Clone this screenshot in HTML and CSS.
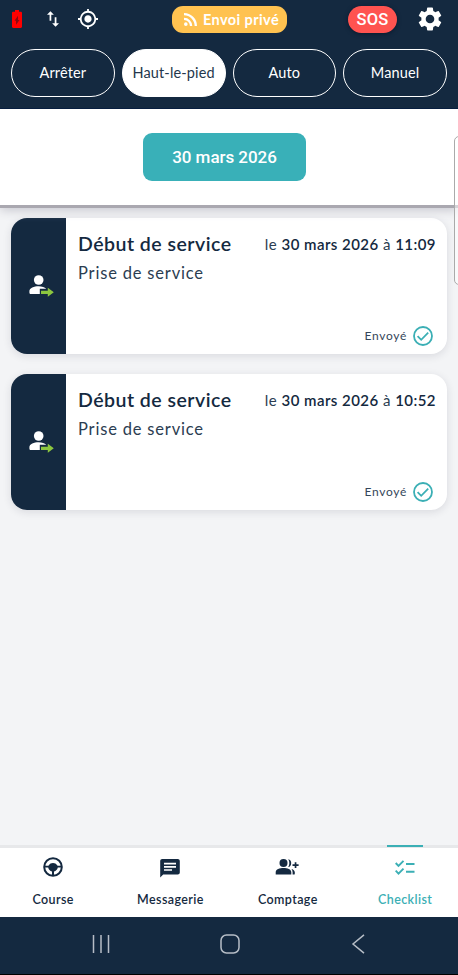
FILE: index.html
```html
<!DOCTYPE html>
<html lang="fr">
<head>
<meta charset="utf-8">
<meta name="viewport" content="width=device-width, initial-scale=1">
<title>Checklist</title>
<link rel="stylesheet" href="styles.css">
</head>
<body>
<div class="app">
  <header class="header">
    <div class="status">
      <svg class="battery" viewBox="7 2 10 20" preserveAspectRatio="none"><path fill="#8d0710" d="M8.500 7h7v13h-7z"/><path d="M15.67 4H14V2h-4v2H8.33C7.6 4 7 4.6 7 5.33v15.33C7 21.4 7.6 22 8.33 22h7.33c.74 0 1.34-.6 1.34-1.33V5.33C17 4.6 16.4 4 15.67 4zM11 18.500v-4.500H9.500L13 8.500v4.500h1.500L11 18.500z"/></svg>
      <svg class="sync" viewBox="5 3 14 18"><path d="M9 3L5 6.99h3V14h2V6.99h3L9 3zm7 14.01V10h-2v7.01h-3L15 21l4-3.99h-3z"/></svg>
      <svg class="gps" viewBox="1 1 22 22"><path d="M12 8c-2.21 0-4 1.79-4 4s1.79 4 4 4 4-1.79 4-4-1.79-4-4-4zm8.94 3A8.994 8.994 0 0 0 13 3.06V1h-2v2.06A8.994 8.994 0 0 0 3.06 11H1v2h2.06A8.994 8.994 0 0 0 11 20.94V23h2v-2.06A8.994 8.994 0 0 0 20.94 13H23v-2h-2.06zM12 19c-3.87 0-7-3.13-7-7s3.13-7 7-7 7 3.13 7 7-3.13 7-7 7z"/></svg>
      <div class="private">
        <svg class="rss" viewBox="4 4.44 15.56 15.56"><path d="M6.18 15.64a2.18 2.18 0 1 1 0 4.36 2.18 2.18 0 0 1 0-4.36M4 4.44A15.56 15.56 0 0 1 19.56 20h-2.83A12.73 12.73 0 0 0 4 7.27zm0 5.66a9.9 9.9 0 0 1 9.9 9.9h-2.83A7.07 7.07 0 0 0 4 12.93z"/></svg>
        <span>Envoi privé</span>
      </div>
      <div class="sos">SOS</div>
      <svg class="gear" viewBox="2 2 20 20"><path d="M19.14 12.94c.04-.3.06-.61.06-.94 0-.32-.02-.64-.07-.94l2.03-1.58a.49.49 0 0 0 .12-.61l-1.92-3.32a.488.488 0 0 0-.59-.22l-2.39.96c-.5-.38-1.03-.7-1.62-.94l-.36-2.54a.484.484 0 0 0-.48-.41h-3.84c-.24 0-.43.17-.47.41l-.36 2.54c-.59.24-1.13.57-1.62.94l-2.39-.96c-.22-.08-.47 0-.59.22L2.74 8.87c-.12.21-.08.47.12.61l2.03 1.58c-.05.3-.09.63-.09.94s.02.64.07.94l-2.03 1.58a.49.49 0 0 0-.12.61l1.92 3.32c.12.22.37.29.59.22l2.39-.96c.5.38 1.03.7 1.62.94l.36 2.54c.05.24.24.41.48.41h3.84c.24 0 .44-.17.47-.41l.36-2.54c.59-.24 1.13-.56 1.62-.94l2.39.96c.22.08.47 0 .59-.22l1.92-3.32c.12-.22.07-.47-.12-.61l-2.01-1.58zM12 15.6A3.6 3.6 0 1 1 12 8.4a3.6 3.6 0 0 1 0 7.2z"/></svg>
    </div>
    <div class="modes">
      <button class="mode">Arrêter</button>
      <button class="mode selected">Haut-le-pied</button>
      <button class="mode">Auto</button>
      <button class="mode">Manuel</button>
    </div>
  </header>
  <section class="datebar"><button class="date">30 mars 2026</button></section>
  <main class="list">
    <article class="card">
      <div class="stripe"><svg class="person" viewBox="0 0 25 22"><circle cx="9.700" cy="5" r="4.800" fill="#fff"/><path fill="#fff" d="M2 19C1 19 .4 18.400.4 17.400V16c0-3 4.600-4.800 9.300-4.800 3.200 0 6 .9 7.600 2.600h-6.500V19z"/><path fill="#8cc63f" d="M12 15.700h6.800v-2.900l6 4.500-6 4.500v-2.900H12z"/></svg></div>
      <div class="content">
        <div class="row"><h2>Début de service</h2><p class="when">le <b>30 mars 2026</b> à <b>11:09</b></p></div>
        <p class="detail">Prise de service</p>
        <div class="sent"><span>Envoyé</span><svg class="check" viewBox="0 0 20 20"><circle cx="10" cy="10" r="9"/><path d="M4.600 10.100l3.600 3.700 7-7.100"/></svg></div>
      </div>
    </article>
    <article class="card">
      <div class="stripe"><svg class="person" viewBox="0 0 25 22"><circle cx="9.700" cy="5" r="4.800" fill="#fff"/><path fill="#fff" d="M2 19C1 19 .4 18.400.4 17.400V16c0-3 4.600-4.800 9.300-4.800 3.200 0 6 .9 7.600 2.600h-6.500V19z"/><path fill="#8cc63f" d="M12 15.700h6.800v-2.900l6 4.500-6 4.500v-2.900H12z"/></svg></div>
      <div class="content">
        <div class="row"><h2>Début de service</h2><p class="when">le <b>30 mars 2026</b> à <b>10:52</b></p></div>
        <p class="detail">Prise de service</p>
        <div class="sent"><span>Envoyé</span><svg class="check" viewBox="0 0 20 20"><circle cx="10" cy="10" r="9"/><path d="M4.600 10.100l3.600 3.700 7-7.100"/></svg></div>
      </div>
    </article>
  </main>
  <nav class="tabs">
    <div class="tab">
      <svg viewBox="0 0 24 24"><circle cx="12" cy="12" r="8.800" fill="none" stroke="currentColor" stroke-width="2"/><path d="M3 10.800h4.400C8.800 8.700 10.200 8 12 8s3.200.7 4.600 2.800H21v1.700h-4.200c-.4 2-1.900 3.500-3.800 4V21h-2v-4.500c-1.900-.5-3.400-2-3.800-4H3z"/></svg>
      <span>Course</span>
    </div>
    <div class="tab">
      <svg viewBox="0 0 24 24"><path d="M4.200 4h15.600c1.100 0 2 .9 2 2v11.600c0 1.100-.9 2-2 2H5.200L2.200 22.500V6c0-1.100.9-2 2-2z"/><path stroke="#fff" stroke-width="1.700" d="M6 8.600h12M6 11.800h12M6 15h8"/></svg>
      <span>Messagerie</span>
    </div>
    <div class="tab">
      <svg viewBox="0 0 24 24"><circle cx="8.500" cy="8.100" r="4"/><path d="M.7 19.500v-2.300c0-3 4-4.300 7.800-4.300s7.800 1.300 7.800 4.300v2.300zM13.200 4.200c4 .2 4 7.500 0 7.800 1.500-2.100 1.500-5.700 0-7.800zM16.500 13.900c2.500.7 4.100 2.900 3.100 5.600h-2v-2.300c0-1.300-.4-2.400-1.100-3.300z"/><path d="M19.700 7.200h1.700v2h2.200v1.700h-2.200v2.200h-1.700v-2.200h-2.200V9.200h2.200z"/></svg>
      <span>Comptage</span>
    </div>
    <div class="tab active">
      <svg viewBox="0 0 24 24"><path fill="none" stroke="currentColor" stroke-width="1.900" d="M2.700 8l2.800 2.900 5-5M2.700 15.700l2.800 2.900 5-5M13 9h8.500M13 16.700h8.500"/></svg>
      <span>Checklist</span>
    </div>
  </nav>
  <footer class="system">
    <svg class="recents" viewBox="0 0 20 20"><path d="M2.500 1v18M10 1v18M17.500 1v18"/></svg>
    <svg class="home" viewBox="0 0 20 20"><rect x="1" y="1" width="18" height="18" rx="5.500"/></svg>
    <svg class="back" viewBox="0 0 20 20"><path d="M15 .8L4 10l11 9.200"/></svg>
  </footer>
  <div class="edge-handle"></div>
</div>
</body>
</html>
```
FILE: styles.css
```css
* { box-sizing: border-box; }
body { margin: 0; color: #142940; font-family: Lato, sans-serif; background: #f3f4f6; }
h2, p { margin: 0; }
button { font: inherit; border: 0; padding: 0; }
svg { display: block; flex: none; fill: currentColor; }
.app { position: relative; display: flex; flex-direction: column; width: 458px; height: 975px; overflow: hidden; }
.header { position: relative; z-index: 1; height: 109px; background: #142940; color: #fff; border-bottom: 1px solid #071e40; }
.status { display: flex; align-items: center; height: 38px; padding-left: 12px; }
.battery { width: 10px; height: 18px; color: #f00; }
.sync { width: 12px; height: 16px; margin-left: 25px; }
.gps { width: 20px; height: 20px; margin-left: 19px; }
.private { display: flex; align-items: center; width: 115px; height: 27px; margin-left: 74px; padding-left: 12px; border-radius: 11px; background: #ffc250; font-size: 14.500px; font-weight: 700; letter-spacing: .4px; white-space: nowrap; }
.rss { width: 13px; height: 13px; margin-right: 6px; }
.sos { width: 49px; height: 27px; margin-left: 61px; border-radius: 14px; background: #ff5350; box-shadow: 0 1px 4px #0a1a2d; text-align: center; font: 500 16.500px/28px Roboto, sans-serif; letter-spacing: .2px; }
.gear { width: 24px; height: 24px; margin-left: 21px; }
.modes { display: grid; grid-template-columns: repeat(4, 1fr); gap: 7px; padding: 11px 11px 0; }
.mode { height: 48px; padding-bottom: 1px; border: 1.500px solid #fff; border-radius: 24px; background: none; color: #fff; font-size: 14.500px; letter-spacing: .15px; white-space: nowrap; }
.mode.selected { background: #fff; color: #24374c; }
.datebar { position: relative; height: 99px; padding: 24px 143px 0; background: #fff; border-bottom: 3px solid #aaa8b0; box-shadow: 0 2px 10px #c5c5cd; }
.date { display: block; width: 163px; height: 48px; border-radius: 9px; background: #39b0b8; color: #fff; font: 500 17px/48px Roboto, sans-serif; letter-spacing: -.05px; }
.list { flex: 1; display: flex; flex-direction: column; gap: 20px; padding: 10px 11px 0; }
.card { display: flex; height: 136px; border-radius: 16px; background: #fff; overflow: hidden; box-shadow: 0 2px 9px rgba(30, 35, 55, .12); }
.stripe { display: flex; width: 55px; padding: 57px 0 0 18px; background: #142940; }
.person { width: 25px; height: 22px; }
.content { flex: 1; display: flex; flex-direction: column; padding: 12px 12px 0; }
.row { display: flex; justify-content: space-between; align-items: center; height: 28px; white-space: nowrap; }
h2 { margin-top: -2px; font-size: 19.500px; font-weight: 600; letter-spacing: .48px; }
.when { margin-top: -1px; margin-right: -1px; font-size: 15px; letter-spacing: .45px; color: #2b3d51; }
.when b { font-weight: 600; color: #142940; }
.detail { font-size: 16.500px; line-height: 30px; letter-spacing: .82px; color: #2b3d51; }
.sent { display: flex; justify-content: flex-end; align-items: center; height: 20px; margin: 38px 2px 0 0; font-size: 12px; letter-spacing: .7px; color: #34465a; }
.sent span { margin-top: -1px; }
.check { width: 20px; height: 20px; margin-left: 6px; fill: none; stroke: #3bafb5; stroke-width: 1.800; }
.tabs { display: grid; grid-template-columns: repeat(4, 117.330px); margin-left: -6px; width: 470px; height: 72px; border-top: 3px solid #e7e8ea; background: #fff; }
.tab { display: flex; flex-direction: column; align-items: center; position: relative; padding-top: 7px; font-size: 12.500px; font-weight: 600; letter-spacing: .4px; }
.tab svg { width: 24px; height: 24px; }
.tab span { margin-top: 13px; padding-left: 1px; line-height: 16px; }
.tab.active { color: #3bafb5; }
.tab.active::before { content: ""; position: absolute; top: -3px; width: 36px; height: 2px; background: #3bafb5; }
.system { display: flex; align-items: center; height: 58px; padding: 0 0 3px 91px; background: #142940; border-bottom: 1px solid #000; color: #b6bdc6; }
.system svg { width: 20px; height: 20px; fill: none; stroke: currentColor; stroke-width: 1.500; }
.home { margin-left: 109px; }
.back { margin-left: 109px; }
.edge-handle { position: absolute; left: 454px; top: 136px; width: 12px; height: 149px; border: 1px solid #aaa; border-radius: 5px; background: rgba(255, 255, 255, .5); }
```
